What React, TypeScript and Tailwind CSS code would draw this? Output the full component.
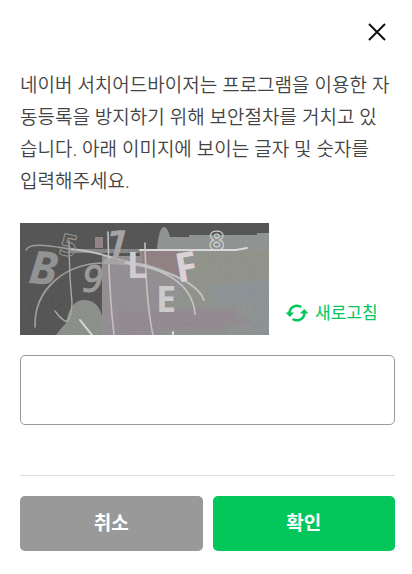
import { useId, useState } from "react";

function CloseIcon() {
  return (
    <svg viewBox="0 0 18 18" className="size-[18px]" fill="none" stroke="#111" strokeWidth="2" aria-hidden="true">
      <path d="M1 1 17 17M17 1 1 17" />
    </svg>
  );
}

function RefreshIcon() {
  return (
    <svg viewBox="0 0 24 18" className="h-[18px] w-6" fill="none" aria-hidden="true">
      <path d="M4.500 9.500A7.600 7.600 0 0 1 16.300 3" stroke="#03c75a" strokeWidth="2.500" />
      <path d="M19.500 8.500A7.600 7.600 0 0 1 7.700 15" stroke="#03c75a" strokeWidth="2.500" />
      <path d="M.5 8.500h8.600L4.800 13z" fill="#03c75a" />
      <path d="M23.500 9.500H14.900L19.200 5z" fill="#03c75a" />
    </svg>
  );
}

function SecurityImage() {
  const id = useId();
  const grain = `${id}-grain`;
  const soft = `${id}-soft`;
  const frame = `${id}-frame`;
  return (
    <svg viewBox="0 0 249 112" className="block h-[112px] w-[249px] shrink-0 overflow-visible" role="img" aria-label="보안 이미지">
      <defs>
        <clipPath id={frame}>
          <rect width="249" height="112" />
        </clipPath>
        <filter id={grain} x="0" y="0" width="100%" height="100%">
          <feTurbulence type="fractalNoise" baseFrequency="0.7" numOctaves="2" />
          <feColorMatrix values="0.5 0.5 0 0 0  0.5 0.5 0 0 0  0.5 0.5 0 0 0  0 0 0 0 1" />
        </filter>
        <filter id={soft} x="-10%" y="-10%" width="120%" height="120%">
          <feGaussianBlur stdDeviation="2" />
        </filter>
      </defs>
      <g clipPath={`url(#${frame})`}>
        <rect width="249" height="112" fill="#484848" />
        <path d="M36 112Q42 104 46 100Q50 77 64 77Q78 77 82 93V112z" fill="#868a84" />
        <path d="M82 33H120V26H137Q139 4 144 4Q148 5 150 14H169V12H237V10H249V112H82z" fill="#8a8e8c" />
        <path d="M180 27h69v33h-50l-10 20h-20l-5-10z" fill="#8b8e84" />
        <path d="M75 14h8v11h-8z" fill="#8c7c80" />
        <path d="M82 33H120V27H158l2 28-20 8v49H82z" fill="#8e888d" />
        <path d="M122 27H158l2 27-24-11-14-2z" fill="#8b797c" />
        <g filter={`url(#${soft})`}>
          <path d="M190 62h25l12-4h24v58h-20V80h-41z" fill="#858e91" />
          <path d="M98 88h60l4-3h54v10h14v7h-22v6h-76l-34 4z" fill="#8d848a" />
          <path d="M150 76h44v8h-44z" fill="#8b8e85" />
        </g>
        <path d="M50 26H120V30H50z" fill="#808080" />
        <g fill="none" stroke="#c4c2c2" strokeLinecap="round">
          <path d="M6 27C10 19 30 23 50 26" strokeWidth="1.600" stroke="#999" />
          <path d="M50 26Q72 28 90 34T125 42C150 50 178 60 184 77" strokeWidth="2" />
          <path d="M120 27H216L227 25" strokeWidth="1.800" stroke="#dedede" />
          <path d="M15 104C14 66 45 40 85 40" strokeWidth="1.700" stroke="#999" />
          <path d="M85 40C130 39 172 54 175 91" strokeWidth="1.800" />
          <path d="M49 18Q49 50 52 80Q51 100 45 98Q40 95 35 88" strokeWidth="1.400" stroke="#a5a5a5" />
          <path d="M88 9Q89 70 94 112M125 20Q126 80 133 112" strokeWidth="1.600" />
          <path d="M60 97 72 112M153 109V112" strokeWidth="2" stroke="#ddd" />
        </g>
      </g>
      <g fontFamily="'Noto Sans', 'Open Sans', sans-serif" fontWeight="700">
        <text x="9" y="61" fontSize="46" fill="#8d8d8d" transform="rotate(5 20 45)" fontStyle="italic">B</text>
        <text x="62" y="69" fontSize="38" fontWeight="400" fill="#989797" stroke="#989797" strokeWidth="1" fontStyle="italic">9</text>
        <text x="83" y="41" fontSize="46" fontWeight="400" fontFamily="'DejaVu Sans', sans-serif" fontStyle="italic" fill="#a3a1a2" stroke="#a3a1a2" transform="rotate(4 96 24)">1</text>
        <text x="107" y="55" fontSize="36" fill="#d5ced3">L</text>
        <text x="155" y="57" fontSize="40" fill="#e1d5da" transform="rotate(-10 170 43)">F</text>
        <text x="136" y="89" fontSize="36" fill="#d0cdd0">E</text>
        <text x="189" y="27" fontSize="27" fill="none" stroke="#ddd" strokeWidth="1">8</text>
        <text x="40" y="33" fontSize="30" fill="none" stroke="#929292" strokeWidth="1" transform="rotate(12 49 22)">5</text>
      </g>
      <rect width="249" height="112" filter={`url(#${grain})`} opacity="0.12" />
    </svg>
  );
}

export default function App() {
  const [answer, setAnswer] = useState("");
  return (
    <main className="bg-white px-5 pt-5 pb-6 pr-[17px] font-['Noto_Sans','Noto_Sans_CJK_KR',sans-serif] text-[#444]">
      <header className="flex justify-end pr-[6px]">
        <button type="button" aria-label="닫기" className="flex size-6 items-center justify-center">
          <CloseIcon />
        </button>
      </header>
      <label htmlFor="answer" className="mt-[25px] block text-[19px] leading-8 font-[350] break-all">
        네이버 서치어드바이저는 프로그램을 이용한 자<br />
        동등록을 방지하기 위해 보안절차를 거치고 있<br />
        습니다. 아래 이미지에 보이는 글자 및 숫자를<br />
        입력해주세요.
      </label>
      <div className="mt-[26px] flex items-end gap-4">
        <SecurityImage />
        <button type="button" className="mb-[10px] flex items-center gap-[6px] text-[17px] leading-6 whitespace-nowrap text-[#03c75a]">
          <RefreshIcon />
          새로고침
        </button>
      </div>
      <input
        id="answer"
        type="text"
        value={answer}
        onChange={(event) => setAnswer(event.target.value)}
        className="mt-5 block h-[70px] w-full rounded-[5px] border border-[#999] px-4 text-2xl outline-none"
      />
      <div className="mt-[50px] grid grid-cols-2 gap-[10px] border-t border-[#ddd] pt-5">
        <button type="button" className="h-[55px] rounded-[5px] bg-[#999] text-[19px] font-bold text-white">취소</button>
        <button type="button" className="h-[55px] rounded-[5px] bg-[#03c75a] text-[19px] font-bold text-white">확인</button>
      </div>
    </main>
  );
}
